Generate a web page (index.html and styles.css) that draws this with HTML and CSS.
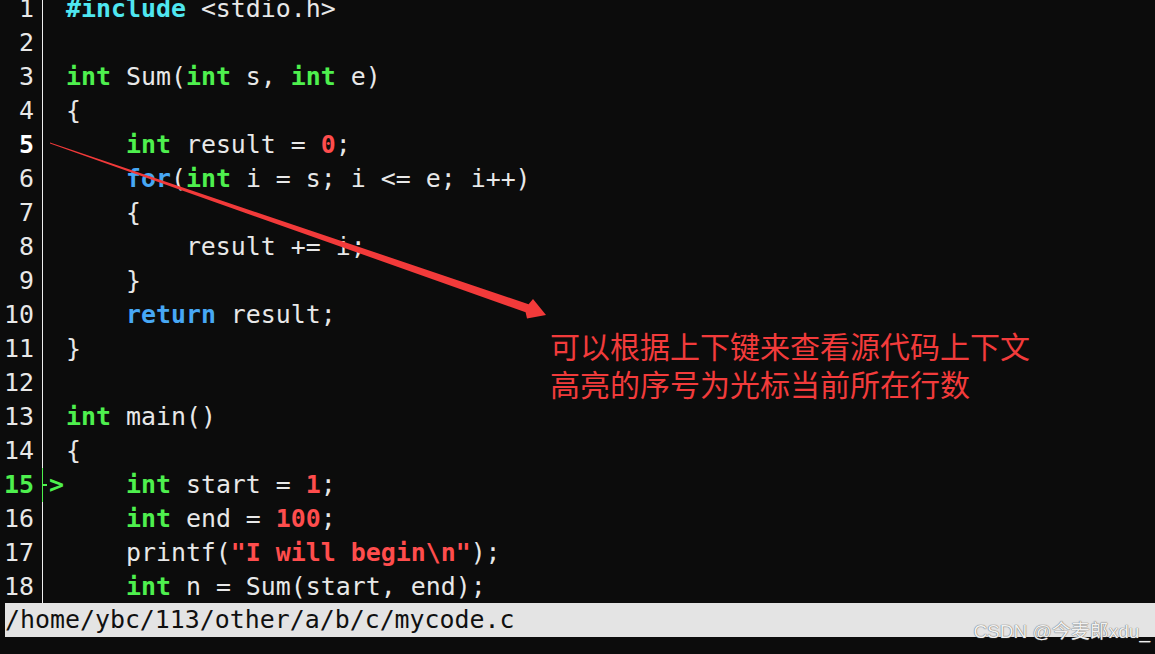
FILE: index.html
```html
<!DOCTYPE html>
<html>
<head>
<meta charset="utf-8">
<link rel="stylesheet" href="styles.css">
</head>
<body>
<div class="screen">
  <div class="code">
    <div class="row"><span class="ln">1</span><span class="gut"></span><span class="src"><b class="pp">#include</b> &lt;stdio.h&gt;</span></div>
    <div class="row"><span class="ln">2</span><span class="gut"></span><span class="src"></span></div>
    <div class="row"><span class="ln">3</span><span class="gut"></span><span class="src"><b class="kw">int</b> Sum(<b class="kw">int</b> s, <b class="kw">int</b> e)</span></div>
    <div class="row"><span class="ln">4</span><span class="gut"></span><span class="src">{</span></div>
    <div class="row"><span class="ln cur">5</span><span class="gut"></span><span class="src">    <b class="kw">int</b> result = <b class="num">0</b>;</span></div>
    <div class="row"><span class="ln">6</span><span class="gut"></span><span class="src">    <b class="st">for</b>(<b class="kw">int</b> i = s; i &lt;= e; i++)</span></div>
    <div class="row"><span class="ln">7</span><span class="gut"></span><span class="src">    {</span></div>
    <div class="row"><span class="ln">8</span><span class="gut"></span><span class="src">        result += i;</span></div>
    <div class="row"><span class="ln">9</span><span class="gut"></span><span class="src">    }</span></div>
    <div class="row"><span class="ln">10</span><span class="gut"></span><span class="src">    <b class="st">return</b> result;</span></div>
    <div class="row"><span class="ln">11</span><span class="gut"></span><span class="src">}</span></div>
    <div class="row"><span class="ln">12</span><span class="gut"></span><span class="src"></span></div>
    <div class="row"><span class="ln">13</span><span class="gut"></span><span class="src"><b class="kw">int</b> main()</span></div>
    <div class="row"><span class="ln">14</span><span class="gut"></span><span class="src">{</span></div>
    <div class="row"><span class="ln exec">15</span><span class="gut gut-exec"><span class="stub"></span><b class="mark">&gt;</b></span><span class="src">    <b class="kw">int</b> start = <b class="num">1</b>;</span></div>
    <div class="row"><span class="ln">16</span><span class="gut"></span><span class="src">    <b class="kw">int</b> end = <b class="num">100</b>;</span></div>
    <div class="row"><span class="ln">17</span><span class="gut"></span><span class="src">    printf(<b class="num">"I will begin\n"</b>);</span></div>
    <div class="row row-last"><span class="ln">18</span><span class="gut"></span><span class="src">    <b class="kw">int</b> n = Sum(start, end);</span></div>
  </div>
  <div class="status">/home/ybc/113/other/a/b/c/mycode.c</div>

  <svg class="arrow" width="1155" height="654" viewBox="0 0 1155 654">
    <polygon fill="#f23a3a" points="50,142.6 528.6,304.2 533,299 546,315 527,318.4 525.6,312.2 50,143.6"/>
  </svg>
  <div class="note">
    <div class="note-line">可以根据上下键来查看源代码上下文</div>
    <div class="note-line">高亮的序号为光标当前所在行数</div>
  </div>
  <div class="watermark">CSDN @今麦郎xdu_</div>
</div>
</body>
</html>
```

FILE: styles.css
```css
html, body {
  margin: 0;
  padding: 0;
  background: #0c0c0c;
}
.screen {
  position: relative;
  width: 1155px;
  height: 654px;
  overflow: hidden;
  background: #0c0c0c;
  font-family: "DejaVu Sans Mono", "Liberation Mono", monospace;
  font-size: 24.9px;
  color: #e8e8e8;
}
.code {
  display: flex;
  flex-direction: column;
  margin-top: -8px;
}
.row {
  display: flex;
  height: 34px;
  line-height: 34px;
  flex: none;
}
.row-last {
  height: 33px;
}
.ln {
  width: 34px;
  text-align: right;
  flex: none;
}
.ln.cur {
  font-weight: bold;
  color: #ffffff;
}
.ln.exec {
  font-weight: bold;
  color: #4ef04e;
}
.gut {
  flex: none;
  width: 23px;
  margin-left: 8px;
  border-left: 1px solid #f0f0f0;
  display: flex;
  align-items: center;
}
.gut-exec {
  border-left-color: #4ef04e;
}
.stub {
  width: 4px;
  height: 2px;
  background: #4ef04e;
  flex: none;
}
.mark {
  color: #4ef04e;
  font-weight: bold;
  margin-left: 2px;
  line-height: 34px;
}
.src {
  white-space: pre;
  flex: 1;
}
b { font-weight: bold; }
.kw { color: #4ef04e; }
.pp { color: #4fe6f0; }
.st { color: #47a8f5; }
.num { color: #ff4d4d; }
.status {
  margin-left: 5px;
  height: 34px;
  line-height: 34px;
  background: #e4e4e4;
  color: #101010;
}
.arrow {
  position: absolute;
  left: 0;
  top: 0;
}
.note {
  position: absolute;
  left: 550px;
  top: 326px;
  font-family: "Noto Sans CJK SC", sans-serif;
  font-size: 30px;
  color: #f23b3b;
  display: flex;
  flex-direction: column;
}
.note-line {
  height: 38px;
  line-height: 38px;
}
.watermark {
  position: absolute;
  right: 5px;
  top: 620px;
  font-family: "Liberation Sans", "Noto Sans CJK SC", sans-serif;
  font-size: 19px;
  line-height: 24px;
  color: rgba(255, 255, 255, 0.92);
  text-shadow: 0 0 1px #6a6a6a, 0 0 1px #6a6a6a;
}
```
